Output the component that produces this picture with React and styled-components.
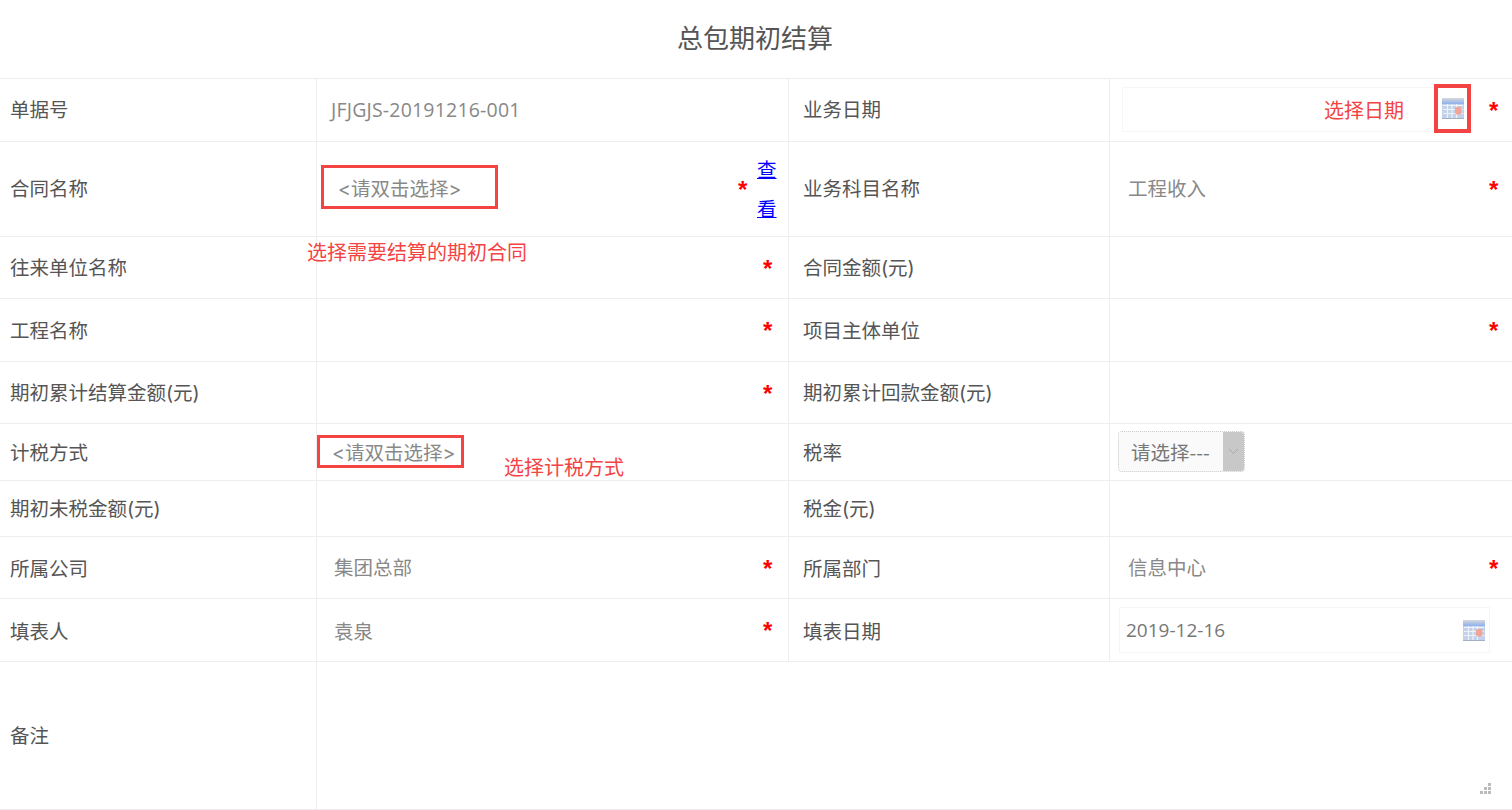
import React from "react";
import styled, { createGlobalStyle } from "styled-components";

const Global = createGlobalStyle`
  html, body { margin: 0; padding: 0; background: #fff; }
  body { font-family: "Noto Sans CJK SC", sans-serif; color: #555; overflow: hidden; }
`;
const Page = styled.div`position: relative; width: 1512px; height: 810px; overflow: hidden;`;
const Title = styled.h1`
  margin: 0; border-bottom: 1px solid #eee; display: flex; align-items: center; justify-content: center;
  padding: 0 2px 4px 0; height: 74px; font-size: 26px; font-weight: 400; color: #555; line-height: 1;
`;
const Row = styled.div`
  display: grid; grid-template-columns: 317px 472px 321px 402px; height: ${p => p.$h}px; box-sizing: border-box; border-bottom: 1px solid #eee;
`;
const NoteRow = styled(Row)`grid-template-columns: 317px 1195px;`;
const Label = styled.div`
  display: flex; align-items: center; box-sizing: border-box; border-right: 1px solid #eee;
  font-family: "Inter", "Noto Sans CJK SC", sans-serif;
  padding-left: ${p => p.$pad ?? 10}px; padding-bottom: ${p => p.$b ?? 2}px; font-size: 19.5px; color: #555; white-space: nowrap;
`;
const Value = styled.div`
  display: flex; align-items: center; box-sizing: border-box; min-width: 0;
  border-right: ${p => p.$last ? "none" : "1px solid #eee"};
  padding-left: ${p => p.$pad ?? 14}px; padding-right: ${p => p.$right ?? 15}px;
  font-size: 19.5px; color: #888; white-space: nowrap;
`;
const Grow = styled.span`flex: 1; min-width: 0; padding-bottom: ${p => p.$b ?? 0}px;`;
const Star = styled.span`
  font-family: "Liberation Sans", sans-serif; font-weight: 700; font-size: 24px; line-height: 1; color: #f00;
  height: 14px; width: 10px; display: block; margin-bottom: 8px;
`;
const RedBox = styled.div`
  box-sizing: border-box; border: 3px solid #f44343; display: flex; align-items: center; color: #888;
  font-family: "Inter", "Noto Sans CJK SC", sans-serif;
  width: ${p => p.$w}px; height: ${p => p.$h}px; padding-left: ${p => p.$pad}px; flex: none; margin-bottom: ${p => p.$b ?? 0}px;
`;
const Link = styled.a`
  width: 20px; margin-left: 9px; margin-bottom: 2px; color: #00f; text-decoration: underline; font-size: 19.5px;
  line-height: 39.5px; white-space: normal; word-break: break-all; flex: none;
`;
const DateBox = styled.div`
  box-sizing: border-box; display: flex; align-items: center; border: 1px solid #f6f6f6; flex: none;
  width: ${p => p.$w}px; height: ${p => p.$h}px; margin-bottom: ${p => p.$b ?? 0}px;
`;
const Note = styled.span`font-size: 20px; color: #f44343; white-space: nowrap; line-height: 1;`;
const Float = styled(Note)`position: absolute; left: ${p => p.$x}px; top: ${p => p.$y}px;`;
const DateNote = styled(Note)`margin-left: auto; margin-right: 47px; margin-top: 2px;`;
const IconFrame = styled.div`
  position: absolute; left: 1434px; top: 84px; width: 37px; height: 49px; box-sizing: border-box; border: 4px solid #f44343;
  display: flex; align-items: center; justify-content: center; background: #fff;
`;
const DateText = styled.span`padding-left: 6px; flex: 1; color: #777; font-size: 19px; font-family: "Open Sans", sans-serif;`;
const SelectBox = styled.div`
  box-sizing: border-box; width: 127px; height: 41px; border: 1px dotted #ccc; border-radius: 4px; background: #fafafa;
  display: flex; align-items: stretch; overflow: hidden; color: #777; font-size: 19.5px; flex: none; margin-bottom: 1px;
`;
const SelectText = styled.span`flex: 1; display: flex; align-items: center; padding-left: 12px;`;
const SelectArrow = styled.span`width: 21px; background: #c8c8c8; display: flex; align-items: center; justify-content: center;`;
const Grip = styled.svg`position: absolute; right: 20px; bottom: 15px;`;
const DocNumber = styled.span`font-size: 19.5px; font-family: "Open Sans", sans-serif; color: #888; padding-bottom: 1px; letter-spacing: 0.2px;`;

const Calendar = ({ id, style }) => (
  <svg width="24" height="23" viewBox="0 0 24 23" style={style}>
    <defs>
      <linearGradient id={id} x1="0" y1="0" x2="0" y2="1">
        <stop offset="0" stopColor="#d8d8da" />
        <stop offset="1" stopColor="#8db0ee" />
      </linearGradient>
      <filter id={`${id}-soft`} x="-10%" y="-10%" width="120%" height="120%"><feGaussianBlur stdDeviation="0.35" /></filter>
    </defs>
    <g filter={`url(#${id}-soft)`}>
      <rect x="1" y="1" width="22" height="21" rx="1.5" fill="#c2d2ea" />
      <rect x="1" y="1" width="22" height="6" fill={`url(#${id})`} />
      <path d="M2 8.5h20M2 12.5h20M2 16.5h20M6.5 7v14M11 7v14M15.5 7v14" stroke="#eff3f9" strokeWidth="1.1" />
      <rect x="14" y="10" width="6.5" height="7.5" rx="2" fill="#f0a596" />
      <path d="M1 21.5h22" stroke="#a3b0c4" strokeWidth="1" />
    </g>
  </svg>
);

const Chevron = () => (
  <svg width="11" height="7" viewBox="0 0 11 7"><path d="M1 1l4.5 4.5L10 1" fill="none" stroke="#aaa" strokeWidth="1" /></svg>
);

export default function App() {
  return (
    <Page>
      <Global />
      <Title>总包期初结算</Title>
      <Row $h={63}>
        <Label $b={4}>单据号</Label>
        <Value><DocNumber>JFJGJS-20191216-001</DocNumber></Value>
        <Label $pad={14} $b={4}>业务日期</Label>
        <Value $last $pad={12} $right={13}>
          <DateBox $w={330} $h={45} $b={2}><DateNote>选择日期</DateNote></DateBox>
          <Grow />
          <Star>*</Star>
        </Value>
      </Row>
      <Row $h={95}>
        <Label $b={4}>合同名称</Label>
        <Value $pad={4} $right={11}>
          <RedBox $w={177} $h={44} $pad={14} $b={4}>&lt;请双击选择&gt;</RedBox>
          <Grow />
          <Star>*</Star>
          <Link>查看</Link>
        </Value>
        <Label $pad={14} $b={4}>业务科目名称</Label>
        <Value $last $pad={18} $right={13}><Grow $b={4}>工程收入</Grow><Star>*</Star></Value>
      </Row>
      <Row $h={62}>
        <Label>往来单位名称</Label>
        <Value><Grow /><Star>*</Star></Value>
        <Label $pad={14}>合同金额(元)</Label>
        <Value $last />
      </Row>
      <Row $h={63}>
        <Label>工程名称</Label>
        <Value><Grow /><Star>*</Star></Value>
        <Label $pad={14}>项目主体单位</Label>
        <Value $last $right={13}><Grow /><Star>*</Star></Value>
      </Row>
      <Row $h={62}>
        <Label>期初累计结算金额(元)</Label>
        <Value><Grow /><Star>*</Star></Value>
        <Label $pad={14}>期初累计回款金额(元)</Label>
        <Value $last />
      </Row>
      <Row $h={57}>
        <Label>计税方式</Label>
        <Value $pad={0}>
          <RedBox $w={147} $h={33} $pad={12} $b={2}>&lt;请双击选择&gt;</RedBox>
        </Value>
        <Label $pad={14}>税率</Label>
        <Value $last $pad={8}>
          <SelectBox>
            <SelectText>请选择---</SelectText>
            <SelectArrow><Chevron /></SelectArrow>
          </SelectBox>
        </Value>
      </Row>
      <Row $h={56}>
        <Label>期初未税金额(元)</Label>
        <Value />
        <Label $pad={14}>税金(元)</Label>
        <Value $last />
      </Row>
      <Row $h={62}>
        <Label $b={0}>所属公司</Label>
        <Value $pad={17}><Grow $b={2}>集团总部</Grow><Star>*</Star></Value>
        <Label $pad={14} $b={0}>所属部门</Label>
        <Value $last $pad={18} $right={13}><Grow $b={2}>信息中心</Grow><Star>*</Star></Value>
      </Row>
      <Row $h={63}>
        <Label $b={0}>填表人</Label>
        <Value $pad={17}><Grow>袁泉</Grow><Star>*</Star></Value>
        <Label $pad={14} $b={0}>填表日期</Label>
        <Value $last $pad={9}>
          <DateBox $w={371} $h={46}>
            <DateText>2019-12-16</DateText>
            <Calendar id="cal-b" style={{ marginRight: 3 }} />
          </DateBox>
        </Value>
      </Row>
      <NoteRow $h={148}>
        <Label>备注</Label>
        <Value $last />
      </NoteRow>
      <Float $x={307} $y={242}>选择需要结算的期初合同</Float>
      <Float $x={504} $y={457}>选择计税方式</Float>
      <IconFrame><Calendar id="cal-a" /></IconFrame>
      <Grip width="12" height="12" viewBox="0 0 12 12" fill="#bbb">
        <rect x="8" y="0" width="3" height="3" /><rect x="4" y="4" width="3" height="3" /><rect x="8" y="4" width="3" height="3" />
        <rect x="0" y="8" width="3" height="3" /><rect x="4" y="8" width="3" height="3" /><rect x="8" y="8" width="3" height="3" />
      </Grip>
    </Page>
  );
}
